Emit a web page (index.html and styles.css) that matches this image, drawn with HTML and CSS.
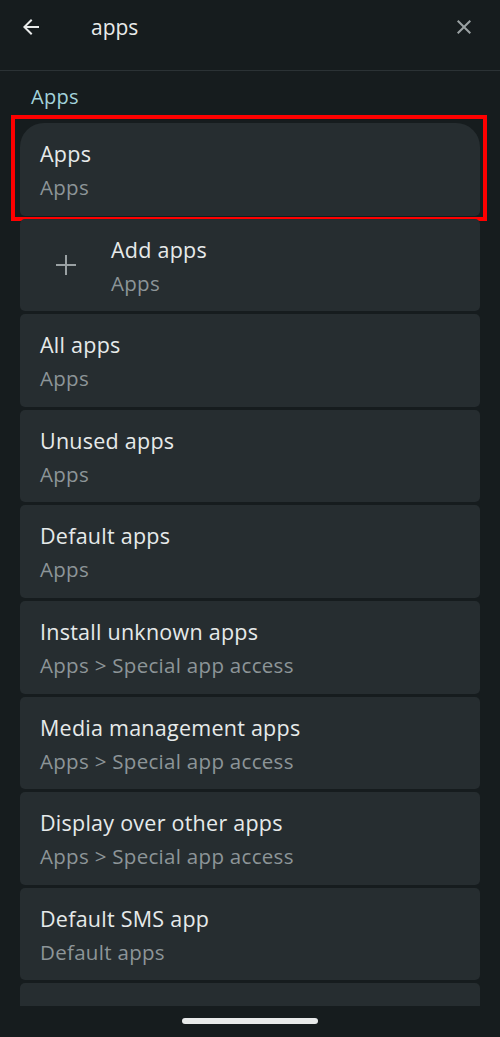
FILE: index.html
```html
<!DOCTYPE html>
<html lang="en">
<head>
  <meta charset="UTF-8">
  <meta name="viewport" content="width=device-width, initial-scale=1.0">
  <title>Settings search</title>
  <link rel="stylesheet" href="styles.css">
</head>
<body>
  <div class="screen">
    <div class="search-bar">
      <svg class="back" width="24" height="24" viewBox="0 0 24 24">
        <path d="M20 11H7.83l5.59-5.59L12 4l-8 8 8 8 1.41-1.41L7.83 13H20v-2z" fill="#e8eaea"/>
      </svg>
      <div class="query">apps</div>
      <svg class="clear" width="24" height="24" viewBox="0 0 24 24">
        <path d="M19 6.41L17.59 5 12 10.59 6.41 5 5 6.41 10.59 12 5 17.59 6.41 19 12 13.41 17.59 19 19 17.59 13.41 12z" fill="#9aa1a3"/>
      </svg>
    </div>

    <div class="results">
      <div class="section-label">Apps</div>
      <div class="list">
        <div class="item first">
          <div class="title">Apps</div>
          <div class="summary">Apps</div>
          <div class="highlight"></div>
        </div>
        <div class="item with-icon">
          <svg class="plus" width="22" height="22" viewBox="0 0 22 22">
            <path d="M11 1v20M1 11h20" stroke="#9aa1a3" stroke-width="2" fill="none"/>
          </svg>
          <div>
            <div class="title">Add apps</div>
            <div class="summary">Apps</div>
          </div>
        </div>
        <div class="item">
          <div class="title">All apps</div>
          <div class="summary">Apps</div>
        </div>
        <div class="item">
          <div class="title">Unused apps</div>
          <div class="summary">Apps</div>
        </div>
        <div class="item">
          <div class="title">Default apps</div>
          <div class="summary">Apps</div>
        </div>
        <div class="item">
          <div class="title">Install unknown apps</div>
          <div class="summary">Apps &gt; Special app access</div>
        </div>
        <div class="item">
          <div class="title">Media management apps</div>
          <div class="summary">Apps &gt; Special app access</div>
        </div>
        <div class="item">
          <div class="title">Display over other apps</div>
          <div class="summary">Apps &gt; Special app access</div>
        </div>
        <div class="item">
          <div class="title">Default SMS app</div>
          <div class="summary">Default apps</div>
        </div>
        <div class="item">
          <div class="title">Default dialer app</div>
          <div class="summary">Default apps</div>
        </div>
      </div>
    </div>

    <div class="nav-bar"><div class="handle"></div></div>
  </div>
</body>
</html>
```

FILE: styles.css
```css
body {
  margin: 0;
  background: #161c1e;
  font-family: "Open Sans", Roboto, sans-serif;
  color: #e6eaea;
}
.screen {
  width: 500px;
  height: 1037px;
  display: flex;
  flex-direction: column;
  overflow: hidden;
}
.search-bar {
  height: 71px;
  flex-shrink: 0;
  border-bottom: 1px solid #2b3235;
  display: flex;
  align-items: flex-start;
  padding: 14px 0 0 19px;
  box-sizing: border-box;
}
.back {
  margin-top: 1px;
}
.query {
  font-size: 21px;
  line-height: 26px;
  margin-left: 48px;
  color: #e8eaea;
}
.clear {
  margin-left: auto;
  margin-right: 24px;
  margin-top: 1px;
}
.results {
  flex: 1;
  overflow: hidden;
  padding: 0 20px;
}
.section-label {
  color: #a3d2da;
  font-size: 20px;
  line-height: 24px;
  padding: 14px 0 0 11px;
  margin-bottom: 14px;
  font-weight: 500;
  letter-spacing: 0.3px;
}
.list {
  display: flex;
  flex-direction: column;
  gap: 3px;
}
.item {
  position: relative;
  background: #262d30;
  border-radius: 5px;
  height: 92.6px;
  box-sizing: border-box;
  padding: 17px 20px 0;
  flex-shrink: 0;
}
.item.first {
  border-radius: 24px 24px 5px 5px;
}
.item.with-icon {
  display: flex;
  align-items: flex-start;
  padding-left: 35px;
}
.plus {
  margin-top: 18px;
  margin-right: 34px;
}
.title {
  font-size: 21.5px;
  line-height: 28px;
  letter-spacing: 0.25px;
  color: #e6eaea;
}
.summary {
  font-size: 20.5px;
  line-height: 26px;
  letter-spacing: 0.3px;
  margin-top: 6px;
  color: #8d9598;
}
.highlight {
  position: absolute;
  top: -8px;
  left: -9px;
  right: -7px;
  bottom: -5px;
  border: 4px solid #ff0000;
}
.nav-bar {
  height: 31px;
  flex-shrink: 0;
  background: #161c1e;
  display: flex;
  justify-content: center;
  padding-top: 12px;
  box-sizing: border-box;
}
.handle {
  width: 136px;
  height: 6px;
  border-radius: 3px;
  background: #e8eaea;
}
```
